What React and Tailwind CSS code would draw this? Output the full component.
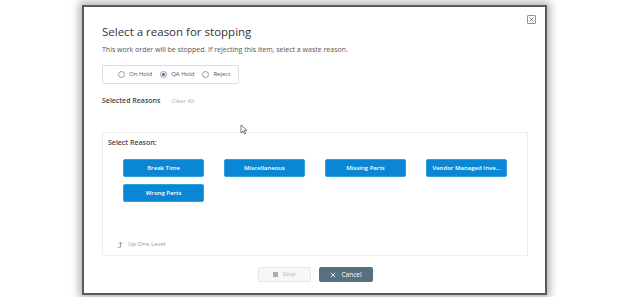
import { X } from 'lucide-react'

const REASONS = ['Break Time', 'Miscellaneous', 'Missing Parts', 'Vendor Managed Inve...', 'Wrong Parts']

function Radio({ label, checked }) {
  return (
    <label className="flex items-center gap-[4px] whitespace-nowrap">
      <span className="w-[7px] h-[7px] rounded-full border border-[#999] bg-white flex items-center justify-center">
        {checked && <span className="w-[3px] h-[3px] rounded-full bg-[#2a6fb0]" />}
      </span>
      <span>{label}</span>
    </label>
  )
}

export default function App() {
  return (
    <div className="w-[634px] h-[297px] bg-white overflow-hidden relative" style={{ fontFamily: '"Open Sans", "Liberation Sans", sans-serif' }}>
      <div className="absolute left-[82px] top-[5px] w-[465px] h-[290px] bg-white border-2 border-[#5a5a5a] shadow-[0_0_8px_3px_rgba(0,0,0,0.3)]">
        <div className="relative px-[18px] pt-[17px]">
          <button className="absolute right-[9px] top-[8px] w-[9px] h-[9px] border border-[#8a95a0] rounded-[1px] flex items-center justify-center">
            <X size={7} strokeWidth={2.5} className="text-[#44505c]" />
          </button>
          <h2 className="text-[11.5px] leading-[16px] text-[#333]">Select a reason for stopping</h2>
          <p className="text-[7px] leading-[10px] text-[#555] mt-[5px]">This work order will be stopped. If rejecting this item, select a waste reason.</p>
          <div className="mt-[10px] w-[137px] h-[19px] border border-[#ddd] rounded-[2px] flex items-center gap-[8px] pl-[15px] text-[6px] text-[#555]">
            <Radio label="On Hold" />
            <Radio label="QA Hold" checked />
            <Radio label="Reject" />
          </div>
          <div className="mt-[12px] flex items-center gap-[11px] text-[7px] leading-[10px]">
            <span className="font-semibold text-[#444]">Selected Reasons</span>
            <span className="text-[#aaa] text-[6px]">Clear All</span>
          </div>
          <div className="mt-[26px] w-[426px] h-[124px] border border-[#eee] flex flex-col">
            <div className="text-[7px] leading-[10px] text-[#444] font-semibold pl-[5px] pt-[5px]">Select Reason:</div>
            <div className="grid grid-cols-[81px_81px_81px_81px] gap-x-[20px] gap-y-[7px] pl-[20px] mt-[11px]">
              {REASONS.map((r) => (
                <button key={r} className="h-[18px] rounded-[2px] bg-[#0a87d4] border border-[#2fa0e0] text-white text-[6px] font-semibold truncate px-1">
                  {r}
                </button>
              ))}
            </div>
            <div className="mt-auto mb-[6px] pl-[14px] flex items-center gap-[4px] text-[6px] text-[#999]">
              <svg width="7" height="7" viewBox="0 0 10 10" fill="none" stroke="#999" strokeWidth="1.3">
                <path d="M1 9h4V2" />
                <path d="M2.5 4L5 1.5 7.5 4" />
              </svg>
              <span>Up One Level</span>
            </div>
          </div>
          <div className="mt-[11px] flex justify-center gap-[8px] pl-[1px]">
            <button className="w-[53px] h-[15px] rounded-[2px] bg-[#f6f7f8] border border-[#e4e6e8] flex items-center justify-center gap-[5px] text-[6px] text-[#b0b4b8]">
              <span className="w-[5px] h-[5px] bg-[#a8aeb4]" />
              Stop
            </button>
            <button className="w-[54px] h-[15px] rounded-[2px] bg-[#56707f] flex items-center justify-center gap-[4px] text-[6.5px] text-white">
              <X size={8} strokeWidth={2.5} />
              Cancel
            </button>
          </div>
        </div>
      </div>
      <svg className="absolute left-[240px] top-[124px]" width="8" height="11" viewBox="0 0 8 11">
        <path d="M1 1v8l2-2 1.5 3 1.2-.6-1.5-3H7z" fill="white" stroke="#555" strokeWidth="0.8" />
      </svg>
    </div>
  )
}
